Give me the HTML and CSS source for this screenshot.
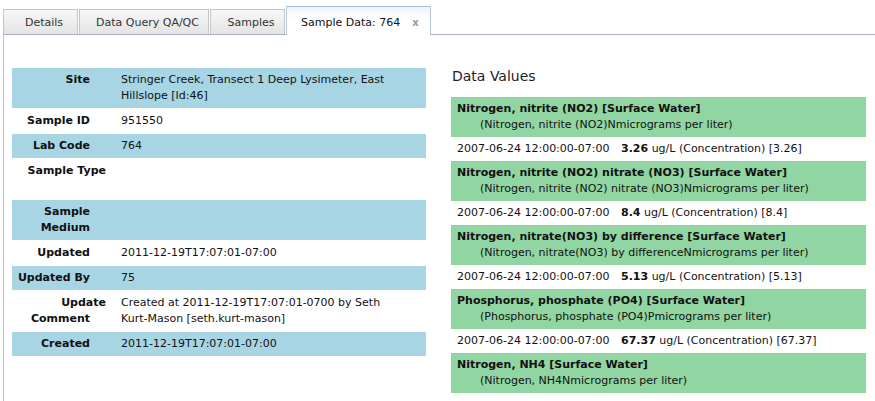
FILE: index.html
```html
<!DOCTYPE html>
<html>
<head>
<meta charset="utf-8">
<link rel="stylesheet" href="styles.css">
</head>
<body>
<div class="tabs">
  <div class="tab w-details">Details</div>
  <div class="tab w-query">Data Query QA/QC</div>
  <div class="tab w-samples">Samples</div>
  <div class="tab active">Sample Data: 764<span class="close">x</span></div>
</div>
<div class="panel">
  <div class="props">
    <div class="prop alt"><div class="lbl">Site</div><div class="val">Stringer Creek, Transect 1 Deep Lysimeter, East Hillslope [Id:46]</div></div>
    <div class="prop"><div class="lbl">Sample ID</div><div class="val">951550</div></div>
    <div class="prop alt"><div class="lbl">Lab Code</div><div class="val">764</div></div>
    <div class="prop"><div class="lbl"><span class="push">Sample Type</span></div><div class="val">&nbsp;<br>&nbsp;</div></div>
    <div class="prop alt"><div class="lbl">Sample Medium</div><div class="val"></div></div>
    <div class="prop"><div class="lbl">Updated</div><div class="val">2011-12-19T17:07:01-07:00</div></div>
    <div class="prop alt"><div class="lbl">Updated By</div><div class="val">75</div></div>
    <div class="prop"><div class="lbl"><span class="push">Update</span><br>Comment</div><div class="val">Created at 2011-12-19T17:07:01-0700 by Seth Kurt-Mason [seth.kurt-mason]</div></div>
    <div class="prop alt"><div class="lbl">Created</div><div class="val">2011-12-19T17:07:01-07:00</div></div>
  </div>
  <div class="values">
    <h2 class="heading">Data Values</h2>
    <div class="series">
      <div class="title">Nitrogen, nitrite (NO2) [Surface Water]</div>
      <div class="sub">(Nitrogen, nitrite (NO2)Nmicrograms per liter)</div>
    </div>
    <div class="datum"><span class="date">2007-06-24 12:00:00-07:00</span><span><b>3.26</b> ug/L (Concentration) [3.26]</span></div>
    <div class="series">
      <div class="title">Nitrogen, nitrite (NO2) nitrate (NO3) [Surface Water]</div>
      <div class="sub">(Nitrogen, nitrite (NO2) nitrate (NO3)Nmicrograms per liter)</div>
    </div>
    <div class="datum"><span class="date">2007-06-24 12:00:00-07:00</span><span><b>8.4</b> ug/L (Concentration) [8.4]</span></div>
    <div class="series">
      <div class="title">Nitrogen, nitrate(NO3) by difference [Surface Water]</div>
      <div class="sub">(Nitrogen, nitrate(NO3) by differenceNmicrograms per liter)</div>
    </div>
    <div class="datum"><span class="date">2007-06-24 12:00:00-07:00</span><span><b>5.13</b> ug/L (Concentration) [5.13]</span></div>
    <div class="series">
      <div class="title">Phosphorus, phosphate (PO4) [Surface Water]</div>
      <div class="sub">(Phosphorus, phosphate (PO4)Pmicrograms per liter)</div>
    </div>
    <div class="datum"><span class="date">2007-06-24 12:00:00-07:00</span><span><b>67.37</b> ug/L (Concentration) [67.37]</span></div>
    <div class="series">
      <div class="title">Nitrogen, NH4 [Surface Water]</div>
      <div class="sub">(Nitrogen, NH4Nmicrograms per liter)</div>
    </div>
  </div>
</div>
</body>
</html>
```
FILE: styles.css
```css
html, body {
  margin: 0;
  padding: 0;
  background: #fff;
}
body {
  font-family: "DejaVu Sans", Verdana, sans-serif;
  font-size: 11px;
  color: #111;
  height: 401px;
  overflow: hidden;
}
.tabs {
  display: flex;
  align-items: flex-end;
  gap: 1px;
  padding: 6px 0 0 3px;
  height: 28px;
}
.tab {
  box-sizing: border-box;
  height: 25px;
  line-height: 20px;
  padding-top: 3px;
  border: 1px solid #c4c4c8;
  border-bottom: none;
  background: linear-gradient(#f7f7f7, #e4e4e4);
  color: #333;
  text-align: center;
  padding-left: 7px;
  white-space: nowrap;
}
.w-details { width: 75px; }
.w-query { width: 130px; }
.w-samples { width: 75px; }
.tab.active {
  width: 145px;
  height: 29px;
  padding-top: 6px;
  margin-bottom: -1px;
  position: relative;
  background: linear-gradient(#eef4fb, #ffffff 45%);
  border-color: #b3c7dc;
  border-top-color: #9fc0e2;
  color: #111;
  text-align: left;
  padding-left: 14px;
}
.close {
  color: #9a9a9a;
  font-weight: bold;
  font-size: 10px;
  margin-left: 12px;
}
.panel {
  box-sizing: border-box;
  border-top: 1px solid #aab0c2;
  border-left: 1px solid #c2c2c8;
  margin-left: 3px;
  height: 367px;
  display: grid;
  grid-template-columns: 414px 415px;
  column-gap: 25px;
  align-items: start;
  padding: 33px 0 0 8px;
}
.props {
  display: flex;
  flex-direction: column;
  gap: 1px;
}
.prop {
  display: grid;
  grid-template-columns: 94px 1fr;
  line-height: 16px;
}
.prop.alt {
  background: #a7d5e4;
}
.lbl {
  font-weight: bold;
  text-align: right;
  padding: 4px 16px 4px 0;
}
.push {
  white-space: nowrap;
  margin-right: -16px;
}
.val {
  padding: 4px 22px 4px 15px;
}
.heading {
  font-size: 14px;
  font-weight: normal;
  color: #222;
  margin: 0 0 12px 1px;
  line-height: 17px;
}
.values {
  line-height: 16px;
}
.series {
  background: #91d5a2;
  padding: 4px 6px;
}
.title {
  font-weight: bold;
}
.sub {
  padding-left: 23px;
}
.datum {
  display: flex;
  padding: 4px 6px;
}
.date {
  width: 164px;
  flex: none;
}
```
